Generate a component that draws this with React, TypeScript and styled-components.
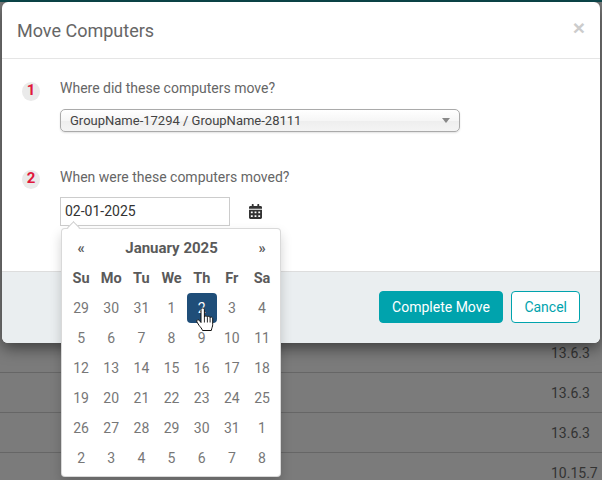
import React from "react";
import styled, { createGlobalStyle } from "styled-components";
import { FaCalendarAlt } from "react-icons/fa";

const Global = createGlobalStyle`
  html, body { margin: 0; padding: 0; height: 100%; overflow: hidden; }
  body { font-family: Roboto, "Liberation Sans", sans-serif; background: #7b7b7b; }
`;

const Page = styled.div`
  position: relative;
  width: 602px;
  height: 480px;
  overflow: hidden;
  background: #7b7b7b;
`;
const TopStrip = styled.div`
  height: 2px;
  background: #0c4a4e;
`;
const Table = styled.div`
  margin-top: 331px;
  display: flex;
  flex-direction: column;
`;
const Row = styled.div`
  height: 40px;
  box-sizing: border-box;
  border-bottom: 1px solid #666;
  display: flex;
  justify-content: flex-end;
  align-items: center;
  padding: 0 10px 0 0;
  font-size: 14px;
  color: #333;
`;
const Version = styled.span`
  width: 41px;
  white-space: nowrap;
`;
const Modal = styled.div`
  position: absolute;
  left: 2px;
  top: 2px;
  width: 598px;
  height: 341px;
  display: flex;
  flex-direction: column;
  background: #fff;
  border-radius: 6px;
  box-shadow: 0 5px 15px rgba(0, 0, 0, 0.5);
`;
const Header = styled.div`
  height: 56px;
  flex: none;
  border-bottom: 1px solid #e5e5e5;
  display: flex;
  align-items: center;
  justify-content: space-between;
  padding: 0 15px;
`;
const Title = styled.h4`
  margin: 0;
  font-size: 18px;
  font-weight: 400;
  color: #666;
`;
const Close = styled.span`
  font-family: "Liberation Sans", sans-serif;
  font-size: 21px;
  font-weight: 700;
  color: #ccc;
  line-height: 1;
  margin: -5px 0 0 0;
`;
const Body = styled.div`
  flex: 1;
  display: flex;
  flex-direction: column;
  padding: 21px 20px 0;
`;
const Step = styled.div<{ $height: number }>`
  display: grid;
  grid-template-columns: 18px 1fr;
  column-gap: 20px;
  height: ${(p) => p.$height}px;
`;
const Badge = styled.div`
  width: 18px;
  height: 19px;
  border-radius: 50%;
  background: #eaeaea;
  color: #e0183c;
  font-weight: 700;
  font-size: 15px;
  line-height: 17px;
  text-align: center;
  margin-top: 2px;
`;
const Question = styled.div<{ $shift?: number }>`
  font-size: 14px;
  line-height: 17px;
  color: #666;
  margin-top: ${(p) => p.$shift ?? 0}px;
  margin-bottom: ${(p) => 12 - (p.$shift ?? 0)}px;
`;
const Select = styled.div`
  width: 400px;
  height: 23px;
  box-sizing: border-box;
  border: 1px solid #aaa;
  border-radius: 5px;
  background: linear-gradient(#fff 0, #f6f6f6 50%, #eee 52%, #f4f4f4 100%);
  box-shadow: 0 1px 2px rgba(0, 0, 0, 0.12);
  display: flex;
  align-items: center;
  justify-content: space-between;
  padding: 0 9px 0 9px;
  font-size: 13px;
  color: #444;
`;
const Arrow = styled.span`
  width: 0;
  height: 0;
  border-left: 4px solid transparent;
  border-right: 4px solid transparent;
  border-top: 5px solid #888;
`;
const DateRow = styled.div`
  position: relative;
  display: flex;
  align-items: center;
  gap: 19px;
`;
const DateInput = styled.div`
  width: 170px;
  height: 29px;
  box-sizing: border-box;
  border: 1px solid #ccc;
  padding: 0 4px;
  font-size: 14px;
  line-height: 27px;
  color: #333;
`;
const CalIcon = styled(FaCalendarAlt)`
  width: 13px;
  height: 15px;
  color: #333;
`;
const Footer = styled.div`
  height: 72px;
  flex: none;
  box-sizing: border-box;
  background: #eaeef0;
  border-top: 1px solid #ddd;
  border-radius: 0 0 6px 6px;
  display: flex;
  justify-content: flex-end;
  align-items: flex-start;
  gap: 8px;
  padding: 19px 20px 0 0;
`;
const Button = styled.div<{ $primary?: boolean }>`
  height: 32px;
  box-sizing: border-box;
  padding: 0 ${(p) => (p.$primary ? 12.5 : 12)}px;
  border: 1px solid #00a3ad;
  border-radius: 4px;
  background: ${(p) => (p.$primary ? "#00a3ad" : "#fff")};
  color: ${(p) => (p.$primary ? "#fff" : "#00a3ad")};
  font-size: 14px;
  line-height: 30px;
`;
const Popup = styled.div`
  position: absolute;
  left: 1px;
  top: 31px;
  width: 220px;
  height: 249px;
  box-sizing: border-box;
  background: #fff;
  border-radius: 4px;
  border: 1px solid rgba(0, 0, 0, 0.15);
  box-shadow: 0 6px 12px rgba(0, 0, 0, 0.175);
  padding: 4px;
  z-index: 2;
  &::before {
    content: "";
    position: absolute;
    left: 7px;
    top: -6px;
    width: 8px;
    height: 8px;
    background: #fff;
    border-left: 1px solid #ccc;
    border-top: 1px solid #ccc;
    transform: rotate(45deg);
  }
`;
const Grid = styled.div`
  display: grid;
  grid-template-columns: repeat(7, 30.17px);
  grid-auto-rows: 30px;
  justify-content: start;
`;
const Cell = styled.div<{ $head?: boolean; $active?: boolean }>`
  display: flex;
  align-items: center;
  justify-content: center;
  font-size: ${(p) => (p.$head ? 14.5 : 14)}px;
  font-weight: ${(p) => (p.$head ? 700 : 400)};
  color: ${(p) => (p.$active ? "#fff" : p.$head ? "#5a5a5a" : "#777")};
  background: ${(p) => (p.$active ? "#1f4e79" : "transparent")};
  border-radius: 4px;
`;
const MonthCell = styled(Cell)`
  grid-column: span 5;
  color: #5a5a5a;
  font-size: 15px;
  font-weight: 700;
`;
const Pointer = styled.svg`
  position: absolute;
  left: 134px;
  top: 78px;
  width: 18px;
  height: 25px;
  z-index: 3;
`;

const weeks = [
  [29, 30, 31, 1, 2, 3, 4],
  [5, 6, 7, 8, 9, 10, 11],
  [12, 13, 14, 15, 16, 17, 18],
  [19, 20, 21, 22, 23, 24, 25],
  [26, 27, 28, 29, 30, 31, 1],
  [2, 3, 4, 5, 6, 7, 8],
];
const days = ["Su", "Mo", "Tu", "We", "Th", "Fr", "Sa"];

export default function App() {
  return (
    <Page>
      <Global />
      <TopStrip />
      <Table>
        {["13.6.3", "13.6.3", "13.6.3", "10.15.7"].map((v, i) => (
          <Row key={i}>
            <Version>{v}</Version>
          </Row>
        ))}
      </Table>
      <Modal>
        <Header>
          <Title>Move Computers</Title>
          <Close>×</Close>
        </Header>
        <Body>
          <Step $height={88}>
            <Badge>1</Badge>
            <div>
              <Question>Where did these computers move?</Question>
              <Select>
                <span>GroupName-17294 / GroupName-28111</span>
                <Arrow />
              </Select>
            </div>
          </Step>
          <Step $height={80}>
            <Badge>2</Badge>
            <div>
              <Question $shift={1}>When were these computers moved?</Question>
              <DateRow>
                <DateInput>02-01-2025</DateInput>
                <CalIcon />
                <Popup>
                  <Grid>
                    <Cell $head>«</Cell>
                    <MonthCell>January 2025</MonthCell>
                    <Cell $head>»</Cell>
                    {days.map((d) => (
                      <Cell $head key={d}>
                        {d}
                      </Cell>
                    ))}
                    {weeks.flat().map((d, i) => (
                      <Cell key={i} $active={i === 4}>
                        {d}
                      </Cell>
                    ))}
                  </Grid>
                  <Pointer viewBox="0 0 18 25">
                    <path
                      d="M5 2.5c0-2 3.4-2 3.4 0V10c.2-1.6 3-1.6 3 .3 0-1.4 2.7-1.4 2.7.5 0-1.2 2.6-1 2.6 1v5.5c0 2.5-1 3.5-1.4 6.2H6.5c-.6-2-2-3.2-3.5-5.2L.9 15c-1-1.8 1.2-3 2.4-1.6L5 15.5Z"
                      fill="#fff"
                      stroke="#111"
                      strokeWidth="1"
                    />
                    <path d="M8.4 10v5.5M11.4 10.5v5M14.1 11v4.5" stroke="#111" strokeWidth="0.9" fill="none" />
                  </Pointer>
                </Popup>
              </DateRow>
            </div>
          </Step>
        </Body>
        <Footer>
          <Button $primary>Complete Move</Button>
          <Button>Cancel</Button>
        </Footer>
      </Modal>
    </Page>
  );
}
